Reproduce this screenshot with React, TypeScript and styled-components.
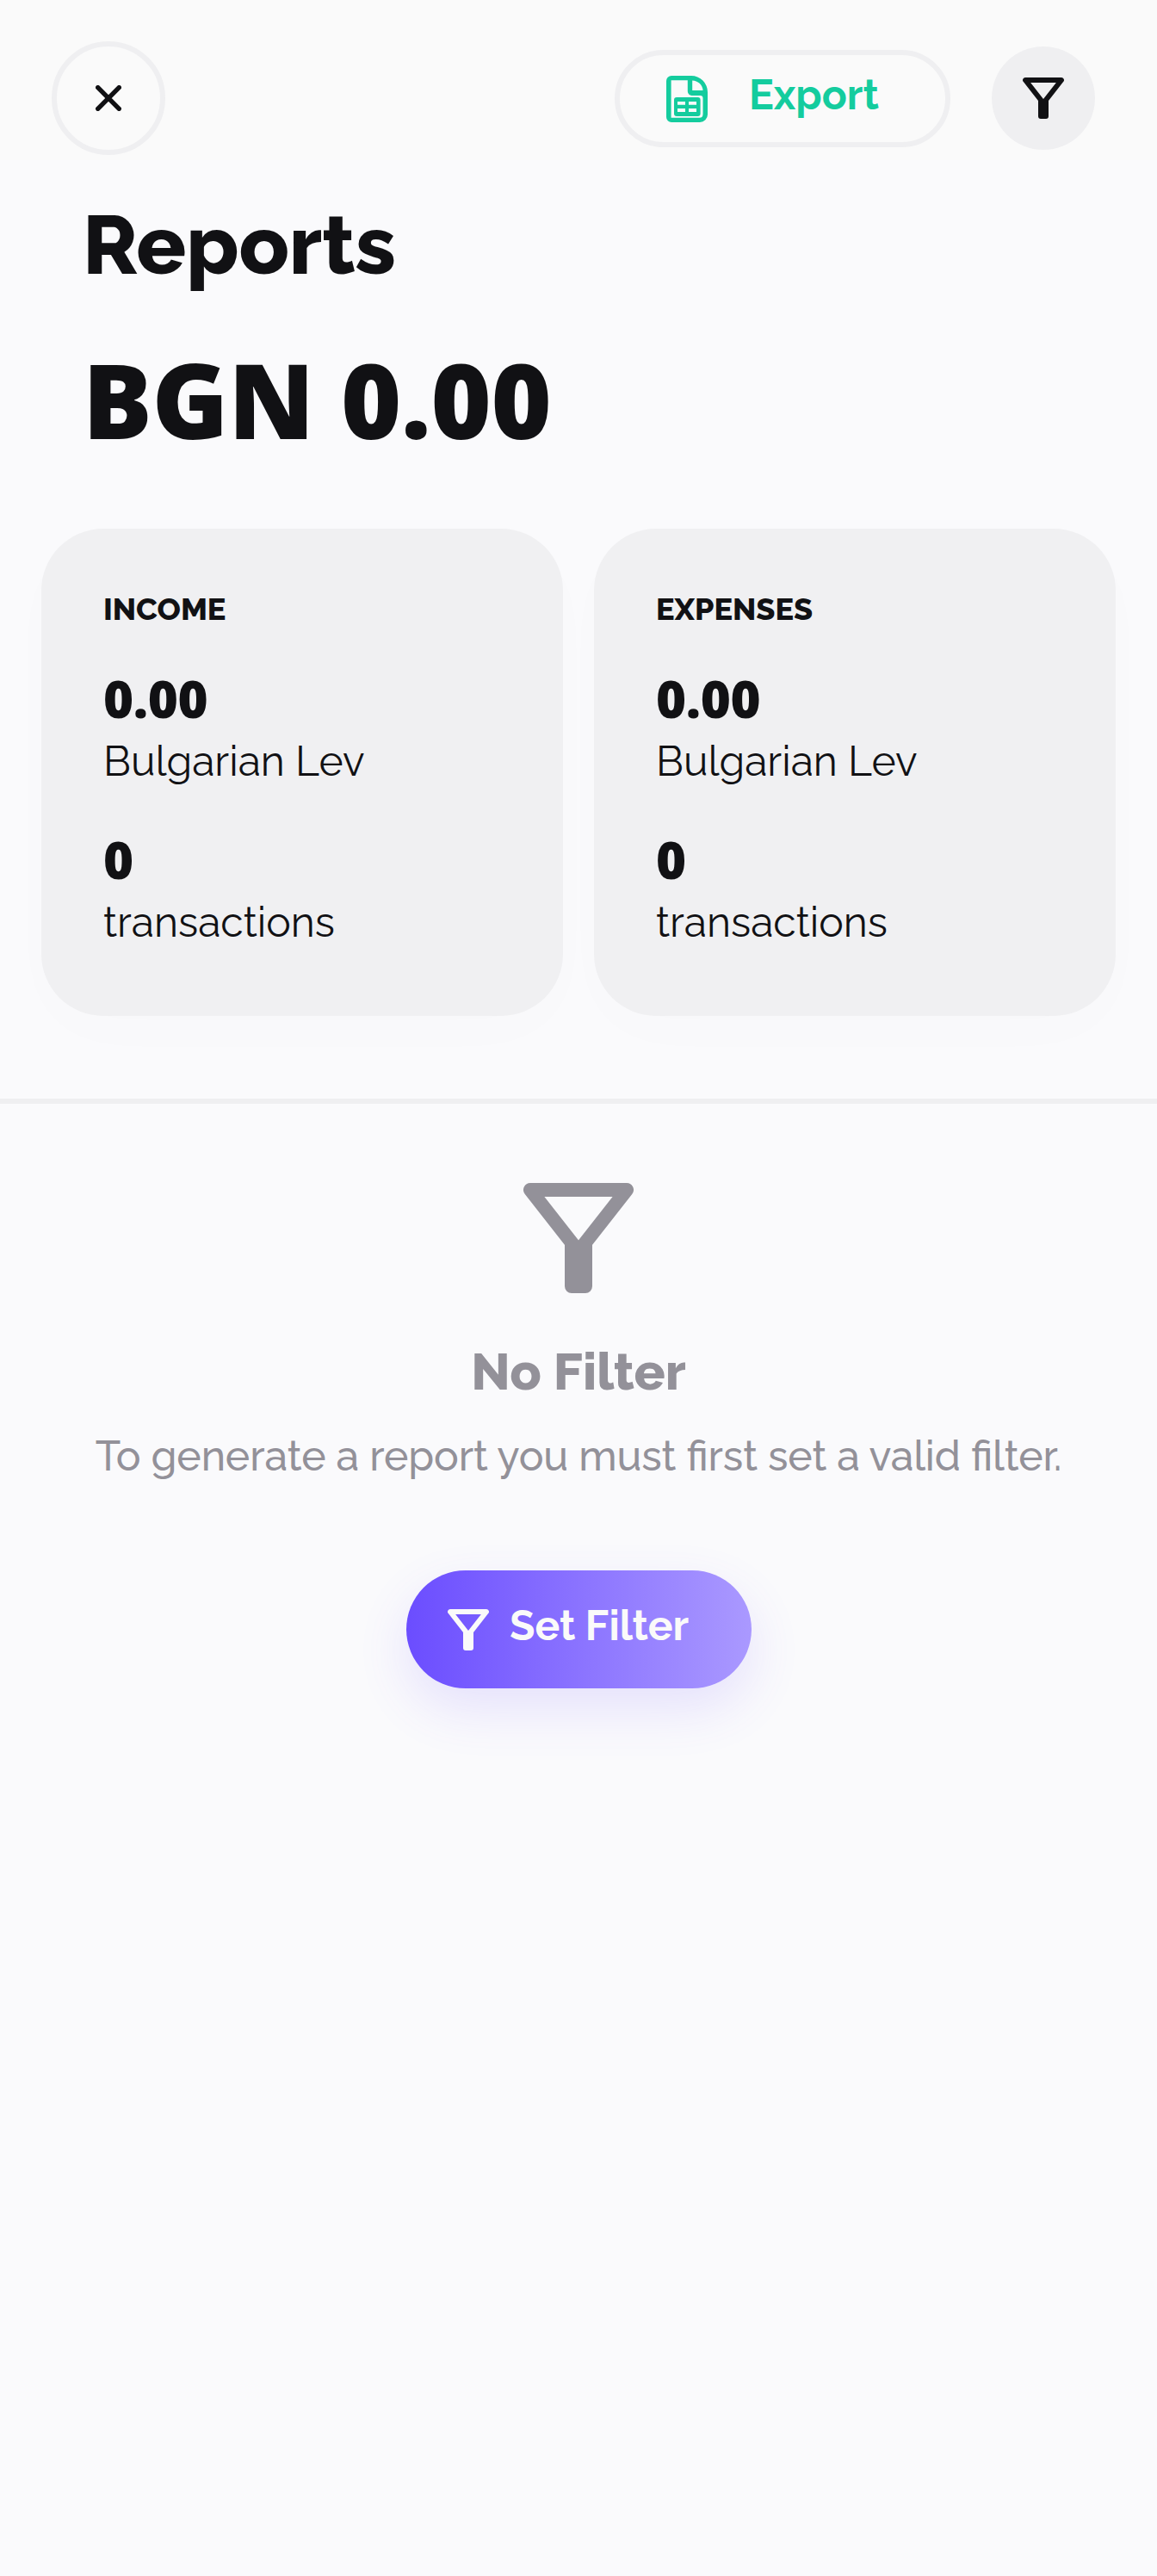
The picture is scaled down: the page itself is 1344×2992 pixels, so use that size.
import React from "react";
import styled, { createGlobalStyle } from "styled-components";

const color = {
  page: "#fafafc",
  bar: "#fafafa",
  ink: "#111114",
  muted: "#939199",
  line: "#efeff1",
  card: "#f0f0f2",
  green: "#14cc9e",
};

const textFont = `Raleway, Lato, "Open Sans", sans-serif`;
const numberFont = `"Open Sans", "Noto Sans", sans-serif`;

const GlobalStyle = createGlobalStyle`
  *, *::before, *::after { box-sizing: border-box; }
  body { margin: 0; background: ${color.page}; color: ${color.ink}; font-family: ${textFont}; }
  button { font-family: inherit; padding: 0; border: 0; background: none; }
`;

const Screen = styled.main`
  width: 1344px;
  min-height: 2992px;
  background: ${color.page};
`;

const TopBar = styled.header`
  display: flex;
  align-items: center;
  height: 186px;
  padding: 42px 72px 0 60px;
  background: ${color.bar};
`;

const CloseButton = styled.button`
  display: grid;
  place-items: center;
  width: 132px;
  height: 132px;
  border: 6px solid ${color.line};
  border-radius: 50%;
`;

const ExportButton = styled.button`
  display: flex;
  align-items: center;
  gap: 48px;
  width: 390px;
  height: 113px;
  margin: 1px 48px 0 auto;
  padding-left: 54px;
  border: 6px solid ${color.line};
  border-radius: 57px;
  color: ${color.green};
`;

const FilterButton = styled.button`
  display: grid;
  place-items: center;
  width: 120px;
  height: 120px;
  border-radius: 50%;
  background: ${color.line};
  color: ${color.ink};
`;

const ButtonIcon = styled.span`
  display: flex;
  margin-top: 1px;
`;

const ButtonLabel = styled.span`
  margin-bottom: 9px;
  font-size: 48px;
  line-height: 58px;
  font-weight: 700;
  white-space: nowrap;
`;

const Title = styled.h1`
  margin: 42px 0 0 96px;
  font-size: 96px;
  line-height: 112px;
  font-weight: 800;
  letter-spacing: -0.2px;
`;

const Balance = styled.div`
  margin: 54px 0 80px 96px;
  font-family: ${numberFont};
  font-size: 120px;
  line-height: 140px;
  font-weight: 800;
  letter-spacing: -0.25px;
`;

const Cards = styled.section`
  display: grid;
  grid-template-columns: 1fr 1fr;
  gap: 36px;
  padding: 0 48px;
`;

const Card = styled.article`
  height: 566px;
  padding: 71px 72px 0;
  border-radius: 72px;
  background: ${color.card};
  box-shadow: 0 20px 72px rgba(17, 17, 40, 0.01);
`;

const CardTitle = styled.h2`
  margin: 0 0 47px;
  font-size: 36px;
  line-height: 44px;
  font-weight: 800;
`;

const Stat = styled.div`
  & + & { margin-top: 50px; }
`;

const StatValue = styled.div`
  font-family: ${numberFont};
  font-size: 60px;
  line-height: 70px;
  font-weight: 800;
  letter-spacing: -0.4px;
`;

const StatLabel = styled.div`
  margin-top: 9px;
  font-size: 48px;
  line-height: 58px;
  font-weight: 400;
`;

const Divider = styled.hr`
  height: 6px;
  margin: 96px 0 92px;
  border: 0;
  background: ${color.line};
`;

const EmptyState = styled.section`
  display: flex;
  flex-direction: column;
  align-items: center;
  color: ${color.muted};
`;

const EmptyTitle = styled.h3`
  margin: 55px 0 33px;
  font-size: 60px;
  line-height: 72px;
  font-weight: 800;
`;

const EmptyText = styled.p`
  margin: 0 0 104px;
  font-size: 48px;
  line-height: 58px;
  font-weight: 500;
  letter-spacing: -0.09px;
  font-feature-settings: "liga" 1;
  white-space: nowrap;
`;

const SetFilterButton = styled.button`
  display: flex;
  align-items: center;
  gap: 24px;
  width: 401px;
  height: 137px;
  margin-left: 1px;
  padding-left: 48px;
  border-radius: 69px;
  color: #fafafa;
  background: linear-gradient(90deg, #6b4dff, #aa99ff);
  box-shadow: 0 24px 60px rgba(107, 77, 255, 0.14);
`;

const FunnelIcon = ({ size }: { size: number }) => (
  <svg width={size} height={size} viewBox="0 0 16 16" fill="currentColor">
    <path
      fillRule="evenodd"
      d="M1 0H15A1 1 0 0 1 15.78 1.62L10 9V15A1 1 0 0 1 9 16H7A1 1 0 0 1 6 15V9L.22 1.62A1 1 0 0 1 1 0ZM3.05 2L8 8.3L12.95 2Z"
    />
  </svg>
);

const CloseIcon = () => (
  <svg width="30" height="30" viewBox="0 0 30 30" stroke={color.ink} strokeWidth="5.4" strokeLinecap="round">
    <path d="M2.7 2.7L27.3 27.3M27.3 2.7L2.7 27.3" />
  </svg>
);

const SheetIcon = () => (
  <svg width="48" height="54" viewBox="0 0 48 54" fill="currentColor">
    <path
      fillRule="evenodd"
      d="M6 0H29A19 19 0 0 1 48 19V45A9 9 0 0 1 39 54H6A6 6 0 0 1 0 48V6A6 6 0 0 1 6 0ZM5.6 5.2V48.8H38.5A4.2 4.2 0 0 0 42.5 44.5V26A3 3 0 0 0 39.5 23H29.5A5 5 0 0 1 24.8 18V5.2ZM30.2 5.4V17H42.5A12.5 12.5 0 0 0 30.2 5.4Z"
    />
    <path
      fillRule="evenodd"
      d="M12 25H36.5A3 3 0 0 1 39.6 28V44A3 3 0 0 1 36.5 47H12A3 3 0 0 1 9 44V28A3 3 0 0 1 12 25ZM13 30V33.7H22V30ZM26 30V33.7H35V30ZM13 38V42H22V38ZM26 38V42H35V38Z"
    />
  </svg>
);

const summaries = ["INCOME", "EXPENSES"];

export default function App() {
  return (
    <Screen>
      <GlobalStyle />
      <TopBar>
        <CloseButton aria-label="Close">
          <CloseIcon />
        </CloseButton>
        <ExportButton>
          <ButtonIcon>
            <SheetIcon />
          </ButtonIcon>
          <ButtonLabel>Export</ButtonLabel>
        </ExportButton>
        <FilterButton aria-label="Filter">
          <FunnelIcon size={48} />
        </FilterButton>
      </TopBar>
      <Title>Reports</Title>
      <Balance>BGN 0.00</Balance>
      <Cards>
        {summaries.map((title) => (
          <Card key={title}>
            <CardTitle>{title}</CardTitle>
            <Stat>
              <StatValue>0.00</StatValue>
              <StatLabel>Bulgarian Lev</StatLabel>
            </Stat>
            <Stat>
              <StatValue>0</StatValue>
              <StatLabel>transactions</StatLabel>
            </Stat>
          </Card>
        ))}
      </Cards>
      <Divider />
      <EmptyState>
        <FunnelIcon size={128} />
        <EmptyTitle>No Filter</EmptyTitle>
        <EmptyText>To generate a report you must first set a valid filter.</EmptyText>
        <SetFilterButton>
          <ButtonIcon>
            <FunnelIcon size={48} />
          </ButtonIcon>
          <ButtonLabel>Set Filter</ButtonLabel>
        </SetFilterButton>
      </EmptyState>
    </Screen>
  );
}
